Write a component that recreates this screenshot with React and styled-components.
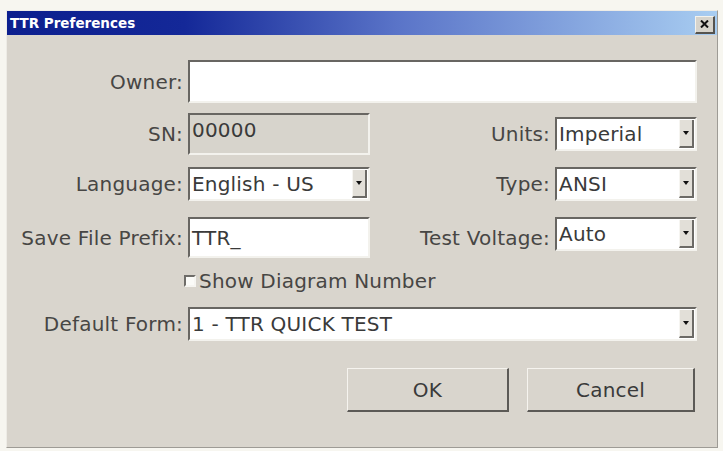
import React from "react";
import styled, { createGlobalStyle } from "styled-components";

const GlobalStyle = createGlobalStyle`
    body {
        margin: 0;
        background: #f7f6f0;
        font-family: "DejaVu Sans", "Liberation Sans", sans-serif;
    }
`;

const Page = styled.div`
    padding: 10px 0 0 6px;
`;

const Window = styled.div`
    width: 710px;
    height: 436px;
    background: #d9d5cd;
    border: 1px solid #eeece6;
    border-right-color: #9e9b95;
    border-bottom-color: #9e9b95;
    display: flex;
    flex-direction: column;
`;

const TitleBar = styled.div`
    height: 24px;
    display: flex;
    align-items: center;
    justify-content: space-between;
    padding: 0 2px 0 3px;
    background: linear-gradient(90deg, #0c1f8e 0%, #142898 25%, #5a74c8 55%, #a8cdf1 100%);
    color: #fff;
    font-weight: bold;
    font-size: 13.5px;
`;

const CloseButton = styled.div`
    box-sizing: border-box;
    width: 20px;
    height: 18px;
    margin-top: 3px;
    background: #d6d3cb;
    border: 1px solid #f4f2ec;
    border-right: 2px solid #55534f;
    border-bottom: 2px solid #55534f;
    display: flex;
    align-items: center;
    justify-content: center;
`;

const Body = styled.div`
    flex: 1;
    padding: 25px 20px 0 3px;
    display: flex;
    flex-direction: column;
    color: #474644;
    font-size: 20px;
    letter-spacing: 0.2px;
`;

const Row = styled.div`
    display: grid;
    grid-template-columns: 174px 182px 177px 142px;
    column-gap: 4px;
    align-items: center;
    margin-top: ${props => props.$top || 0}px;
`;

const Label = styled.div`
    text-align: right;
    white-space: nowrap;
    padding-right: 1px;
`;

const Field = styled.div`
    box-sizing: border-box;
    height: ${props => props.$h}px;
    grid-column: ${props => props.$span || "auto"};
    align-self: ${props => props.$self || "center"};
    background: ${props => (props.$disabled ? "#d7d4cc" : "#fff")};
    border: 2px solid #f3f2ed;
    border-top-color: #686662;
    border-left-color: #686662;
    display: flex;
    align-items: ${props => (props.$disabled ? "flex-start" : "center")};
    padding-left: 2px;
    white-space: nowrap;
    color: #3a3a3a;
`;

const ComboText = styled.div`
    flex: 1;
    padding-top: ${props => props.$pad || 0}px;
`;

const DropButton = styled.div`
    align-self: stretch;
    width: 12px;
    margin: 1px 1px 1px 0;
    background: #e2dfd8;
    border-left: 1px solid #f6f5f1;
    border-right: 2px solid #6c6a66;
    border-bottom: 2px solid #6c6a66;
    display: flex;
    align-items: center;
    justify-content: center;
`;

const Arrow = styled.div`
    width: 0;
    height: 0;
    border-left: 3px solid transparent;
    border-right: 3px solid transparent;
    border-top: 4px solid #111;
`;

const CheckRow = styled.div`
    display: flex;
    align-items: center;
    gap: 3px;
    margin: 12px 0 0 174px;
    height: 22px;
`;

const CheckBox = styled.div`
    width: 12px;
    height: 12px;
    box-sizing: border-box;
    background: #fbfbf8;
    border: 2px solid #f6f5f1;
    border-top-color: #6e6c68;
    border-left-color: #6e6c68;
`;

const ButtonRow = styled.div`
    display: flex;
    justify-content: flex-end;
    gap: 18px;
    margin: 27px 2px 0 0;
`;

const Button = styled.div`
    box-sizing: border-box;
    width: ${props => props.$w}px;
    height: 44px;
    background: #d9d5cd;
    border: 1px solid #f6f4ef;
    border-right: 2px solid #5c5a56;
    border-bottom: 2px solid #5c5a56;
    display: flex;
    align-items: center;
    justify-content: center;
    color: #3a3a3a;
`;

const Combo = ({ h, value, span, self }) => (
    <Field $h={h} $span={span} $self={self}>
        <ComboText>{value}</ComboText>
        <DropButton>
            <Arrow />
        </DropButton>
    </Field>
);

const App = () => {
    return (
        <>
            <GlobalStyle />
            <Page>
                <Window>
                    <TitleBar>
                        <span>TTR Preferences</span>
                        <CloseButton>
                            <svg width="9" height="8" viewBox="0 0 9 8">
                                <path d="M1 0.5 L8 7.5 M8 0.5 L1 7.5" stroke="#111" strokeWidth="2" />
                            </svg>
                        </CloseButton>
                    </TitleBar>
                    <Body>
                        <Row>
                            <Label>Owner:</Label>
                            <Field $h={43} $span="2 / 5" />
                        </Row>
                        <Row $top={10}>
                            <Label>SN:</Label>
                            <Field $h={42} $disabled>
                                <ComboText $pad={3}>00000</ComboText>
                            </Field>
                            <Label>Units:</Label>
                            <Combo h={34} value="Imperial" />
                        </Row>
                        <Row $top={12}>
                            <Label>Language:</Label>
                            <Combo h={34} value="English - US" />
                            <Label>Type:</Label>
                            <Combo h={34} value="ANSI" />
                        </Row>
                        <Row $top={16}>
                            <Label>Save File Prefix:</Label>
                            <Field $h={41}>TTR_</Field>
                            <Label>Test Voltage:</Label>
                            <Combo h={34} value="Auto" self="start" />
                        </Row>
                        <CheckRow>
                            <CheckBox />
                            <span>Show Diagram Number</span>
                        </CheckRow>
                        <Row $top={15}>
                            <Label>Default Form:</Label>
                            <Combo h={34} value="1 - TTR QUICK TEST" span="2 / 5" />
                        </Row>
                        <ButtonRow>
                            <Button $w={162}>OK</Button>
                            <Button $w={168}>Cancel</Button>
                        </ButtonRow>
                    </Body>
                </Window>
            </Page>
        </>
    );
};

export default App;
